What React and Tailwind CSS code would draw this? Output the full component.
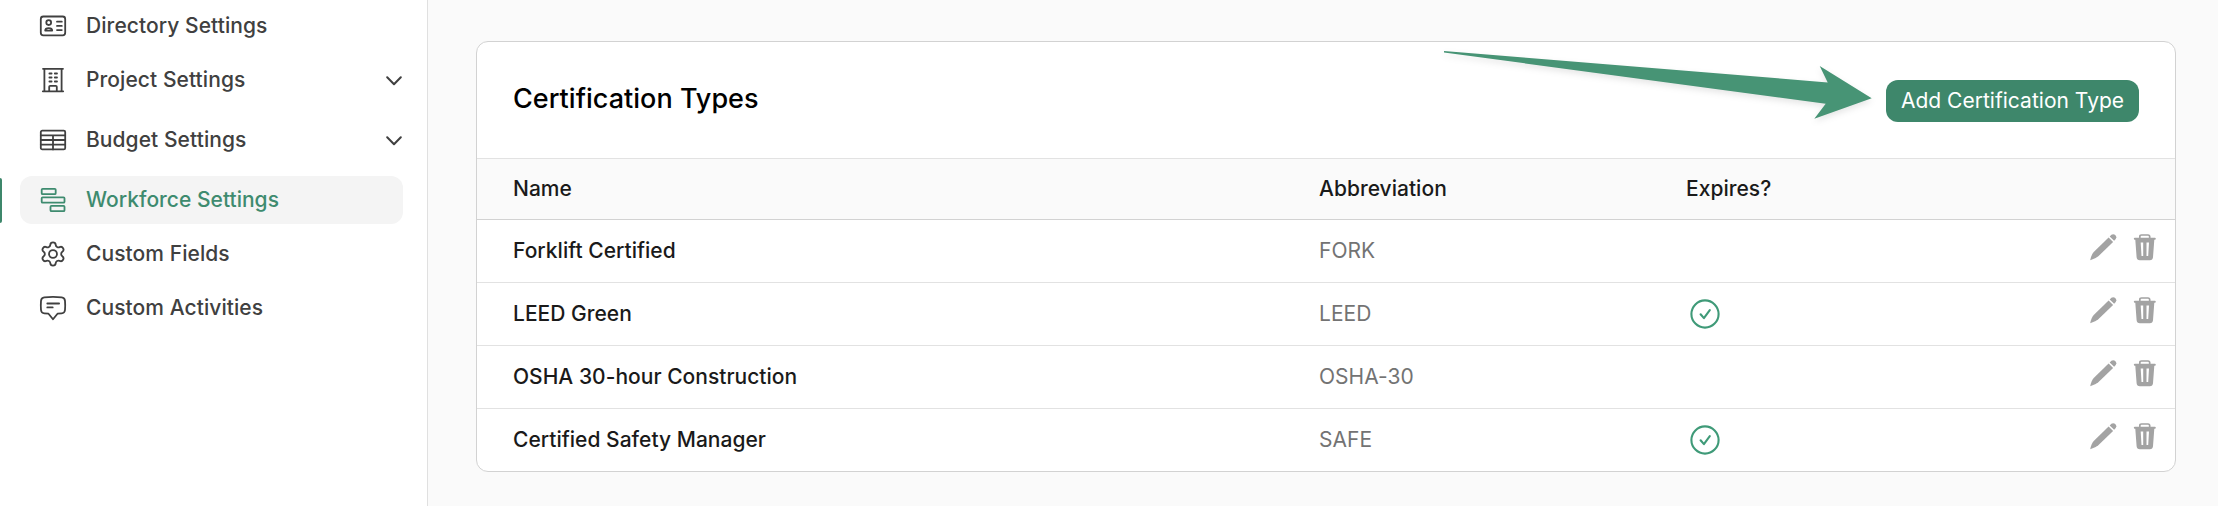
import { useState } from 'react';
import clsx from 'clsx';

const MENU = [
  { id: 'directory', label: 'Directory Settings', icon: DirectoryIcon },
  { id: 'project', label: 'Project Settings', icon: BuildingIcon, expandable: true },
  { id: 'budget', label: 'Budget Settings', icon: TableIcon, expandable: true },
  { id: 'workforce', label: 'Workforce Settings', icon: WorkforceIcon },
  { id: 'fields', label: 'Custom Fields', icon: GearIcon },
  { id: 'activities', label: 'Custom Activities', icon: ChatIcon },
];

const CERTIFICATIONS = [
  { name: 'Forklift Certified', abbreviation: 'FORK', expires: false },
  { name: 'LEED Green', abbreviation: 'LEED', expires: true },
  { name: 'OSHA 30-hour Construction', abbreviation: 'OSHA-30', expires: false },
  { name: 'Certified Safety Manager', abbreviation: 'SAFE', expires: true },
];

export default function App() {
  const [active, setActive] = useState('workforce');

  return (
    <div className="flex h-[506px] w-full overflow-hidden bg-[#fafafa] font-['Inter',sans-serif] text-[21px] leading-[30px] tracking-[0.02px]">
      {/* Sidebar */}
      <nav className="w-[428px] shrink-0 border-r border-[#e0e0e0] bg-white pt-0.5">
        {MENU.map((item) => (
          <MenuItem key={item.id} item={item} active={item.id === active} onSelect={setActive} />
        ))}
      </nav>

      <main className="flex-1 pt-[41px] pr-[42px] pl-12">
        <section className="h-[431px] overflow-hidden rounded-xl border border-[#d2d2d2] bg-white">
          <header className="relative flex h-[117px] items-center justify-between border-b border-[#e2e2e2] pr-9 pl-9">
            <h1 className="pb-0.5 text-[27px] font-medium text-black">Certification Types</h1>
            <PointerArrow />
            <button className="mt-0.5 flex h-[42px] w-[253px] items-center justify-center rounded-xl bg-[#3e876b] whitespace-nowrap text-white">
              Add Certification Type
            </button>
          </header>

          <div className="flex h-[61px] items-center border-b border-[#d2d2d2] bg-[#fafafa] pl-9 font-medium text-[#1a1a1a]">
            <span className="w-[806px]">Name</span>
            <span className="w-[367px]">Abbreviation</span>
            <span>Expires?</span>
          </div>

          {CERTIFICATIONS.map((c) => (
            <div key={c.abbreviation} className="flex h-[63px] items-center border-b border-[#e2e2e2] pr-[18px] pl-9">
              <span className="w-[806px] font-medium text-[#1a1a1a]">{c.name}</span>
              <span className="w-[367px] text-[#737373]">{c.abbreviation}</span>
              <span className="flex-1 pl-1">{c.expires && <CheckIcon />}</span>
              <div className="flex gap-4 pb-2 text-[#a3a3a3]">
                <PencilIcon />
                <TrashIcon />
              </div>
            </div>
          ))}
        </section>
      </main>
    </div>
  );
}

function MenuItem({ item, active, onSelect }) {
  const Icon = item.icon;
  return (
    <div className={clsx('flex items-center', item.expandable ? 'mb-3' : 'mb-1.5')}>
      <span className={clsx('mr-[18px] h-[45px] w-0.5 rounded-r-sm', active && 'bg-[#3e876b]')} />
      <button
        onClick={() => onSelect(item.id)}
        className={clsx(
          'flex h-12 w-[383px] items-center rounded-xl pl-[19px] text-left font-medium',
          active ? 'bg-[#f4f4f4] text-[#3e8b6f]' : 'text-[#404040] tracking-[0.07px]'
        )}
      >
        <Icon />
        <span className="flex-1 pl-[19px]">{item.label}</span>
        {item.expandable && (
          <svg className="mt-0.5 mr-px" width="16" height="10" viewBox="0 0 16 10" fill="none" stroke="currentColor" strokeWidth="2" strokeLinecap="round" strokeLinejoin="round">
            <path d="M1.2 1.2 8 8.2 14.8 1.2" />
          </svg>
        )}
      </button>
    </div>
  );
}

function MenuSvg({ children }) {
  return (
    <svg width="28" height="28" viewBox="0 0 28 28" fill="none" stroke="currentColor" strokeWidth="1.8" strokeLinecap="round" strokeLinejoin="round">
      {children}
    </svg>
  );
}

function DirectoryIcon() {
  return (
    <MenuSvg>
      <rect x="1.8" y="4.5" width="24.4" height="18.8" rx="2.5" />
      <circle cx="9.7" cy="10.6" r="2.4" />
      <path d="M6.2 18.6c0-3.4 7-3.4 7 0Z" />
      <path d="M18 9.7h4.8M18 13.9h4.8M18 18.1h4.8" />
    </MenuSvg>
  );
}

function BuildingIcon() {
  return (
    <MenuSvg>
      <path d="M4 2.8h20M5.4 2.8v22M22.6 2.8v22M3.8 25.3h20.4" />
      <path d="M10.2 25v-4.2q0-1 1-1h5.6q1 0 1 1V25" />
      <path d="M10.4 7.5h2.2M15.8 7.5H18M10.4 11.5h2.2M15.8 11.5H18M10.4 15.5h2.2M15.8 15.5H18" />
    </MenuSvg>
  );
}

function TableIcon() {
  return (
    <MenuSvg>
      <rect x="1.8" y="4.6" width="24.4" height="18.8" rx="1.5" />
      <path d="M1.8 9.4h24.4M1.8 14h24.4M1.8 18.7h24.4M14 9.4v14" />
    </MenuSvg>
  );
}

function WorkforceIcon() {
  return (
    <MenuSvg>
      <rect x="2.7" y="2.8" width="14" height="5.4" rx="1" />
      <rect x="2.7" y="11.3" width="22.8" height="5.4" rx="1" />
      <rect x="11.5" y="19.8" width="14" height="5.4" rx="1" />
    </MenuSvg>
  );
}

function GearIcon() {
  return (
    <svg width="28" height="28" viewBox="0 0 24 24" fill="none" stroke="currentColor" strokeWidth="1.55" strokeLinecap="round" strokeLinejoin="round">
      <path d="M9.671 4.136a2.34 2.34 0 0 1 4.659 0 2.34 2.34 0 0 0 3.319 1.915 2.34 2.34 0 0 1 2.33 4.033 2.34 2.34 0 0 0 0 3.831 2.34 2.34 0 0 1-2.33 4.033 2.34 2.34 0 0 0-3.319 1.915 2.34 2.34 0 0 1-4.659 0 2.34 2.34 0 0 0-3.32-1.915 2.34 2.34 0 0 1-2.33-4.033 2.34 2.34 0 0 0 0-3.831A2.34 2.34 0 0 1 6.35 6.051a2.34 2.34 0 0 0 3.319-1.915" />
      <circle cx="12" cy="12" r="3.4" />
    </svg>
  );
}

function ChatIcon() {
  return (
    <MenuSvg>
      <path d="M5.3 3.4q8.7-1.2 17.4 0 3 .4 3.3 3.4.4 4.7 0 9.2-.4 3.2-3.3 3.4l-4.2.3L14 25.2l-4.5-5.5-4.2-.3Q2.4 19.2 2 16q-.4-4.500 0-9.200.3-3 3.300-3.400Z" />
      <path d="M8.3 9.5h11.8M8.3 13.4h5.4" />
    </MenuSvg>
  );
}

function CheckIcon() {
  return (
    <svg width="30" height="30" viewBox="0 0 30 30" fill="none" stroke="#3f9a78" strokeWidth="2.1" strokeLinecap="round" strokeLinejoin="round">
      <circle cx="15" cy="15" r="13.6" />
      <path d="M10.6 15.3 13.9 19.1 19.8 11.2" />
    </svg>
  );
}

function PencilIcon() {
  return (
    <svg width="28" height="28" viewBox="0 0 28 28" fill="currentColor">
      <path d="M19.6 4.4 24.1 8.9 9.3 23.3Q6.8 25.7 1.2 27.2 2.4 21.5 4.7 19Z" />
      <path d="M20.7 3.4Q23.2.2 26 1.8 29 4.6 25.1 7.8Z" />
    </svg>
  );
}

function TrashIcon() {
  return (
    <svg width="24" height="28" viewBox="0 0 24 28" fill="currentColor">
      <path d="M6.8 5V3.7Q6.8 2 8.5 2H15q1.7 0 1.7 1.7V5" fill="none" stroke="currentColor" strokeWidth="1.7" />
      <path fillRule="evenodd" d="M1.8 4.8h20q1 0 1 1t-1 1h-.5L20 24.3q-.3 2.9-3.2 2.9h-10q-2.900 0-3.200-2.900L2.300 6.800h-.5q-1 0-1-1t1-1ZM7.700 9.400l.8 13.500h1.700V9.400ZM13.500 9.400v13.500h1.700l.8-13.500Z" />
    </svg>
  );
}

// Callout arrow that leads to the add button
function PointerArrow() {
  return (
    <svg className="absolute top-0 left-[963px] drop-shadow-[0_3px_3px_rgba(0,0,0,0.1)]" width="440" height="90" viewBox="1440 42 440 90" fill="#479475">
      <path d="M1444 51 1827.7 82.4 1819.7 66 1871.7 98.3 1814.3 118.7 1825.7 103.7 1444 52.5Z" />
    </svg>
  );
}
